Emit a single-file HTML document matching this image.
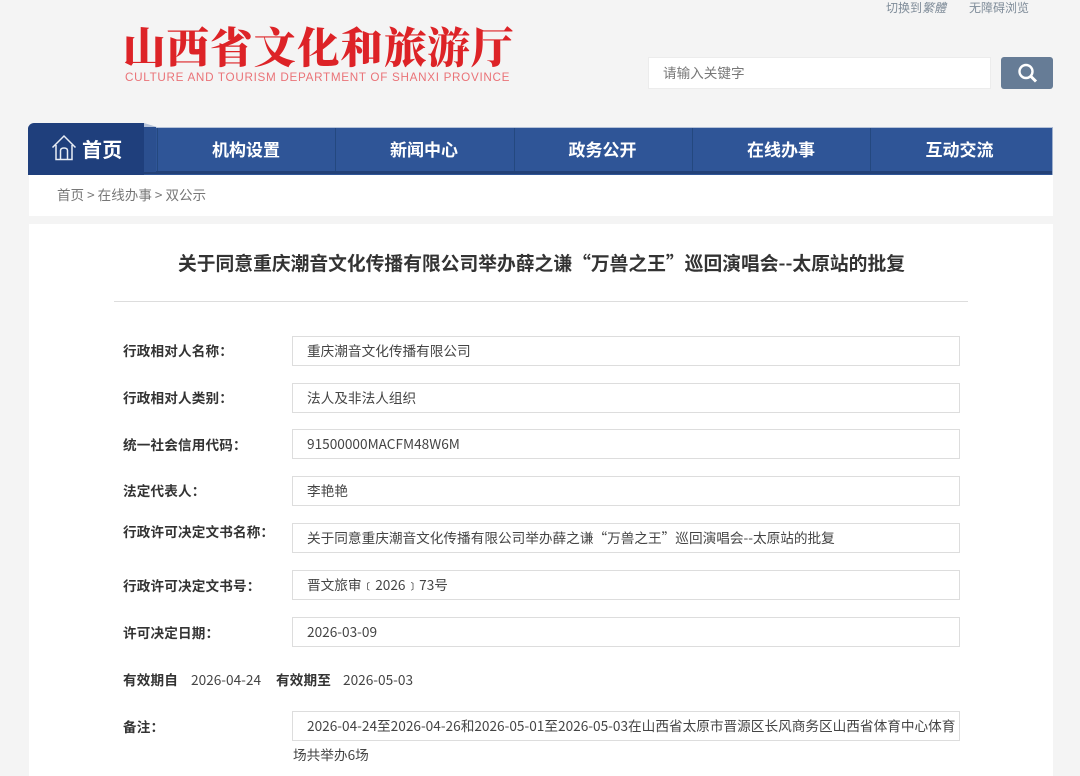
<!DOCTYPE html>
<html lang="zh-CN"><head><meta charset="utf-8"><style>
html,body{margin:0;padding:0;width:1080px;height:776px;overflow:hidden;background:#f4f4f4}
body{position:relative;font-family:"Liberation Sans","Noto Sans CJK SC",sans-serif;color:#444}
.a{position:absolute;white-space:nowrap}
.n{font-family:"Noto Sans CJK SC",sans-serif}
.lb{left:123px;font:700 13.6px/20px "Noto Sans CJK SC",sans-serif;color:#333;letter-spacing:.15px;margin-top:-1px}
.bx{position:absolute;left:292px;width:666px;height:28px;border:1px solid #ddd;background:#fff;font:13.65px/26px "Noto Sans CJK SC",sans-serif;color:#444;text-indent:14px;white-space:nowrap;overflow:hidden}
.nv{position:absolute;top:128px;height:43px;text-align:center;font:700 17px/42px "Noto Sans CJK SC",sans-serif;color:#fff;border-left:1px solid #24487f;box-sizing:border-box;padding-right:2px}
</style></head><body>
<div class="a" style="left:123px;top:16px;font:900 42.5px/60px 'Noto Serif CJK SC',serif;color:#dd2327;letter-spacing:1px">山西省文化和旅游厅</div>
<div class="a" style="left:125px;top:71px;font:11.7px/14px 'Liberation Sans',sans-serif;color:#ea7378;letter-spacing:.69px">CULTURE AND TOURISM DEPARTMENT OF SHANXI PROVINCE</div>
<div class="a n" style="left:886px;top:0;font-size:12px;line-height:16px;color:#7f8c99">切换到<i>繁體</i></div>
<div class="a n" style="left:969px;top:0;font-size:12px;line-height:16px;color:#7f8c99">无障碍浏览</div>
<div class="a n" style="left:648px;top:57px;width:341px;height:30px;background:#fff;border:1px solid #ececec;font-size:13.6px;line-height:29px;text-indent:14px;color:#777">请输入关键字</div>
<div class="a" style="left:1001px;top:57px;width:52px;height:32px;background:#667c96;border-radius:3px"></div>
<svg class="a" style="left:1016px;top:62px" width="24" height="22" viewBox="0 0 24 22" fill="none" stroke="#fff"><circle cx="10" cy="9.500" r="6.500" stroke-width="2.400"/><path d="M15 14.500L20 19.500" stroke-width="3"/></svg>

<div class="a" style="left:28px;top:127px;width:1025px;height:48px;background:#2f5597;border-top:1px solid #b5c2d8;box-sizing:border-box;border-right:1px solid #9fb0cc"></div>
<div class="a" style="left:28px;top:171px;width:1024px;height:3px;background:#234177"></div>
<div class="nv" style="left:157px;width:179px;border-left:1px solid #24487f">机构设置</div>
<div class="nv" style="left:335px;width:179px">新闻中心</div>
<div class="nv" style="left:514px;width:178px">政务公开</div>
<div class="nv" style="left:692px;width:179px">在线办事</div>
<div class="nv" style="left:870px;width:180px">互动交流</div>
<div class="a" style="left:144px;top:123px;width:13px;height:4px;background:#b5c2d8;clip-path:polygon(0 0,100% 100%,0 100%)"></div>
<div class="a" style="left:144px;top:127px;width:12px;height:45px;background:#2b4f8f"></div>
<div class="a" style="left:28px;top:123px;width:116px;height:52px;background:#1f3f7c;border-radius:6px 0 0 0"></div>
<svg class="a" style="left:51px;top:134px" width="26" height="28" viewBox="0 0 26 28" fill="none" stroke="#e8edf5" stroke-width="1.500"><path d="M1.500 13.500L13 2l11.500 11.500M5 11v14.500h16V11M9.500 25.500V16.500q0-2.500 3.500-2.500t3.500 2.500v9"/></svg>
<div class="a n" style="left:82px;top:134px;font-size:20px;font-weight:700;line-height:30px;color:#fff;letter-spacing:.3px">首页</div>

<div class="a" style="left:29px;top:175px;width:1024px;height:41px;background:#fff"></div>
<div class="a n" style="left:57px;top:185px;font-size:13.55px;line-height:19px;color:#777">首页 &gt; 在线办事 &gt; 双公示</div>
<div class="a" style="left:29px;top:224px;width:1024px;height:552px;background:#fff"></div>
<div class="a n" style="left:178px;top:249px;font-size:18.77px;font-weight:700;line-height:28px;color:#333">关于同意重庆潮音文化传播有限公司举办薛之谦“万兽之王”巡回演唱会--太原站的批复</div>
<div class="a" style="left:114px;top:301px;width:854px;height:1px;background:#ddd"></div>

<div class="a lb" style="top:341px">行政相对人名称：</div><div class="bx" style="top:336px">重庆潮音文化传播有限公司</div>
<div class="a lb" style="top:388px">行政相对人类别：</div><div class="bx" style="top:383px">法人及非法人组织</div>
<div class="a lb" style="top:435px">统一社会信用代码：</div><div class="bx" style="top:429px">91500000MACFM48W6M</div>
<div class="a lb" style="top:481px">法定代表人：</div><div class="bx" style="top:476px">李艳艳</div>
<div class="a lb" style="top:522px">行政许可决定文书名称：</div><div class="bx" style="top:523px">关于同意重庆潮音文化传播有限公司举办薛之谦“万兽之王”巡回演唱会--太原站的批复</div>
<div class="a lb" style="top:576px">行政许可决定文书号：</div><div class="bx" style="top:570px">晋文旅审﹝2026﹞73号</div>
<div class="a lb" style="top:623px">许可决定日期：</div><div class="bx" style="top:617px">2026-03-09</div>
<div class="a lb" style="top:670px">有效期自</div><div class="a n" style="left:191px;top:669px;font-size:13.65px;line-height:20px">2026-04-24</div>
<div class="a lb" style="left:276px;top:670px">有效期至</div><div class="a n" style="left:343px;top:669px;font-size:13.65px;line-height:20px">2026-05-03</div>
<div class="a lb" style="top:717px">备注：</div><div class="bx" style="top:711px">2026-04-24至2026-04-26和2026-05-01至2026-05-03在山西省太原市晋源区长风商务区山西省体育中心体育</div>
<div class="a n" style="left:293px;top:744px;font-size:13.65px;line-height:20px">场共举办6场</div>
</body></html>
